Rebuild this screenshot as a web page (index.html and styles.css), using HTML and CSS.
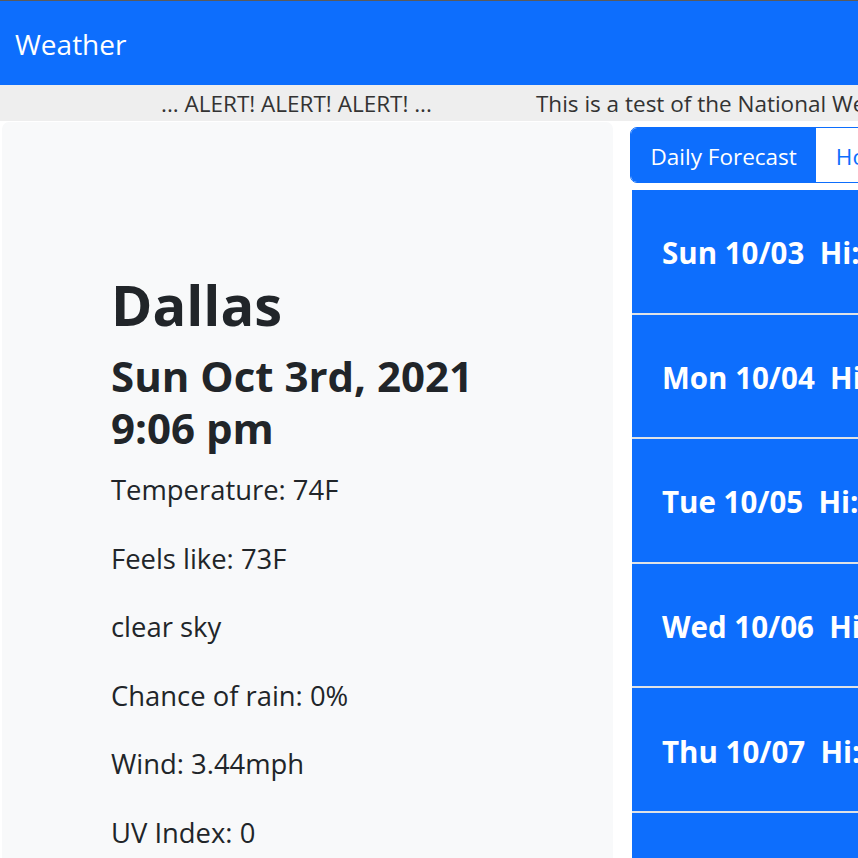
FILE: index.html
```html
<!DOCTYPE html>
<html lang="en">
<head>
<meta charset="utf-8">
<title>Weather</title>
<link rel="stylesheet" href="styles.css">
</head>
<body>
<nav class="navbar"><span class="brand">Weather</span></nav>
<div class="alert-bar">
  <div class="marquee">
    <span class="alert-head">... ALERT! ALERT! ALERT! ...</span>
    <span class="alert-body">This is a test of the National Weather Service emergency alert system.</span>
  </div>
</div>
<main class="layout">
  <section class="current">
    <h1 class="city">Dallas</h1>
    <h2 class="datetime">Sun Oct 3rd, 2021<br>9:06 pm</h2>
    <p class="stat">Temperature: 74F</p>
    <p class="stat">Feels like: 73F</p>
    <p class="stat">clear sky</p>
    <p class="stat">Chance of rain: 0%</p>
    <p class="stat">Wind: 3.44mph</p>
    <p class="stat">UV Index: 0</p>
  </section>
  <section class="forecast">
    <div class="btn-group">
      <button class="tab tab-active">Daily Forecast</button>
      <button class="tab">Hourly Forecast</button>
    </div>
    <ul class="days">
      <li class="day">Sun 10/03  Hi: 89F  Lo: 71F</li>
      <li class="day">Mon 10/04  Hi: 87F  Lo: 70F</li>
      <li class="day">Tue 10/05  Hi: 86F  Lo: 69F</li>
      <li class="day">Wed 10/06  Hi: 88F  Lo: 68F</li>
      <li class="day">Thu 10/07  Hi: 89F  Lo: 70F</li>
      <li class="day">Fri 10/08  Hi: 85F  Lo: 67F</li>
    </ul>
  </section>
</main>
</body>
</html>
```
FILE: styles.css
```css
html, body {
  margin: 0;
  padding: 0;
  overflow: hidden;
  width: 858px;
  height: 858px;
}
body {
  font-family: "Open Sans", "Noto Sans", sans-serif;
  color: #212529;
  background: #ffffff;
  border-top: 1px solid #5a5a5a;
  box-sizing: border-box;
}
.navbar {
  height: 84px;
  background: #0d6efd;
  display: flex;
  align-items: center;
  padding-left: 15px;
}
.brand {
  color: #ffffff;
  font-size: 28px;
  padding-top: 2px;
}
.alert-bar {
  height: 36px;
  background: #eeeeee;
  overflow: hidden;
  display: flex;
  align-items: center;
}
.marquee {
  display: flex;
  gap: 104px;
  white-space: nowrap;
  padding-left: 161px;
  font-size: 22.5px;
  color: #333333;
}
.layout {
  display: grid;
  grid-template-columns: 611px 1fr;
  gap: 1px;
  margin-top: 1px;
  padding-left: 2px;
}
.current {
  background: #f8f9fa;
  border-radius: 7px;
  padding: 148px 20px 0 109px;
  height: 760px;
}
.city {
  font-size: 56px;
  font-weight: 700;
  line-height: 68.4px;
  margin: 0;
}
.datetime {
  font-size: 42px;
  font-weight: 700;
  line-height: 52px;
  margin: 12px 0 14.6px;
}
.stat {
  font-size: 27.4px;
  line-height: 41px;
  margin: 0 0 27.6px;
}
.forecast {
  padding: 5px 0 0 16px;
  min-width: 0;
  overflow: hidden;
}
.btn-group {
  display: flex;
  border: 1px solid #0d6efd;
  border-radius: 7px 0 0 7px;
  width: 400px;
}
.tab {
  font-family: inherit;
  font-size: 22.5px;
  height: 54px;
  padding: 2px 19.5px 0;
  border: 0;
  background: #ffffff;
  color: #0d6efd;
  white-space: nowrap;
}
.tab-active {
  background: #0d6efd;
  color: #ffffff;
  border-radius: 6px 0 0 6px;
}
.days {
  list-style: none;
  margin: 7px 0 0 2px;
  padding: 0;
  width: 600px;
}
.day {
  height: 119.6px;
  background: #0d6efd;
  border-bottom: 2px solid #dee2e6;
  color: #ffffff;
  font-weight: 700;
  font-size: 29.5px;
  white-space: pre;
  display: flex;
  align-items: center;
  padding-left: 30px;
  padding-top: 3px;
  box-sizing: content-box;
}
```
